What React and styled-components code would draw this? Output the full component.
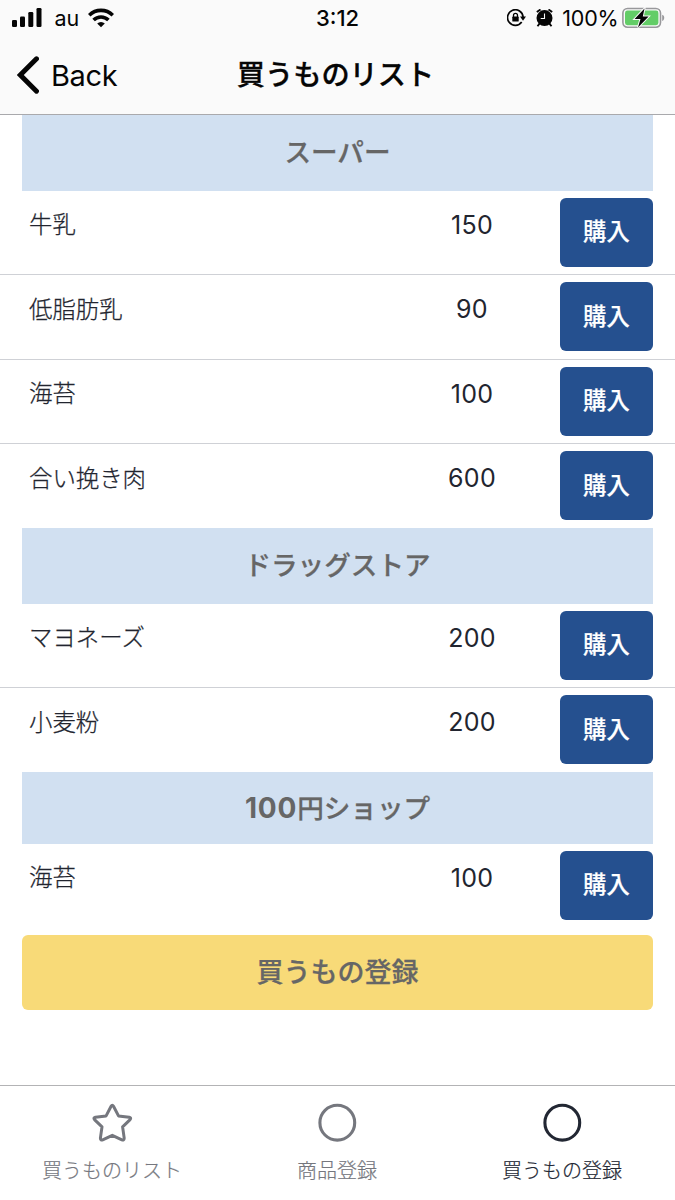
import React from "react";
import styled, { createGlobalStyle } from "styled-components";

const GlobalStyle = createGlobalStyle`
  *, *::before, *::after { box-sizing: border-box; }
  body {
    margin: 0;
    background: #fff;
    font-family: Inter, "Noto Sans CJK JP", sans-serif;
    color: #22252f;
  }
  button { font-family: inherit; border: 0; padding: 0; margin: 0; }
`;

const Screen = styled.div`
  width: 675px;
  height: 1200px;
  display: flex;
  flex-direction: column;
  overflow: hidden;
  background: #fff;
`;

const Header = styled.header`
  height: 115px;
  flex: none;
  background: #fafafa;
  border-bottom: 1px solid #a9a9ac;
  color: #050505;
`;

const StatusBar = styled.div`
  height: 36px;
  display: grid;
  grid-template-columns: 1fr auto 1fr;
  align-items: center;
  padding: 0 10px 0 12px;
`;

const StatusGroup = styled.div`
  display: flex;
  align-items: center;
  justify-content: ${(p) => (p.$end ? "flex-end" : "flex-start")};
  svg { display: block; flex: none; }
`;

const StatusText = styled.span`
  font-size: ${(p) => p.$size || 22}px;
  font-weight: ${(p) => p.$weight || 400};
  line-height: 28px;
  letter-spacing: ${(p) => p.$track || 0}px;
  margin: ${(p) => p.$margin || "0"};
`;

const NavBar = styled.nav`
  height: 78px;
  display: grid;
  grid-template-columns: 1fr auto 1fr;
  align-items: center;
  padding: 0 17px;
`;

const BackButton = styled.button`
  display: flex;
  align-items: center;
  gap: 12px;
  background: none;
  color: inherit;
  font-size: 29px;
  line-height: 36px;
  letter-spacing: -0.35px;
  svg { display: block; }
  span { padding-top: 2px; }
`;

const Title = styled.h1`
  margin: 0 4px 1px 0;
  font-size: 28.2px;
  line-height: 40px;
  font-weight: 500;
  -webkit-text-stroke: 0.3px currentColor;
`;

const List = styled.main`
  flex: 1;
  min-height: 0;
`;

const SectionTitle = styled.h2`
  margin: 0 22px;
  height: ${(p) => p.$height || 75.5}px;
  padding-bottom: ${(p) => (p.$height ? 0 : 2)}px;
  display: flex;
  align-items: center;
  justify-content: center;
  background: #d1e0f1;
  color: #666;
  font-size: 26.6px;
  line-height: 40px;
  font-weight: 500;
  -webkit-text-stroke: 0.25px currentColor;
`;

const Digits = styled.span`
  font-size: 28px;
  font-weight: 700;
  letter-spacing: 0.8px;
  -webkit-text-stroke: 0;
`;

const Row = styled.div`
  height: ${(p) => (p.$last ? 84 : 84.5)}px;
  display: grid;
  grid-template-columns: 1fr 176px 93px;
  padding: 7.4px 22px 0 29px;
  border-bottom: ${(p) => (p.$last ? "0" : "1px solid #cfd1d6")};
`;

const ItemName = styled.span`
  font-size: 23.4px;
  line-height: 36px;
  font-weight: 300;
  -webkit-text-stroke: 0.25px currentColor;
  padding-top: 9.5px;
`;

const Price = styled.span`
  font-size: 25px;
  line-height: 36px;
  letter-spacing: 0.3px;
  padding-top: 9px;
  text-align: center;
`;

const BuyButton = styled.button`
  height: 69px;
  border-radius: 6px;
  background: #25508f;
  color: #fff;
  font-size: 23.4px;
  line-height: 36px;
  font-weight: 500;
  -webkit-text-stroke: 0.2px currentColor;
`;

const RegisterButton = styled.button`
  display: block;
  width: calc(100% - 44px);
  height: 75px;
  margin: 7.5px 22px 0;
  border-radius: 6px;
  background: #f8da78;
  color: #666;
  font-size: 27px;
  line-height: 40px;
  font-weight: 500;
  -webkit-text-stroke: 0.25px currentColor;
`;

const TabBar = styled.nav`
  height: 115px;
  flex: none;
  display: grid;
  grid-template-columns: repeat(3, 1fr);
  border-top: 1px solid #b3b3b5;
`;

const Tab = styled.a`
  display: flex;
  flex-direction: column;
  align-items: center;
  padding: 16px 1px 0 0;
  color: ${(p) => (p.$active ? "#222733" : "#75777e")};
  font-size: 20px;
  line-height: 30px;
  font-weight: 300;
  -webkit-text-stroke: 0.2px currentColor;
  svg { display: block; margin-bottom: 12px; }
`;

const SignalIcon = () => (
  <svg width="30" height="20" viewBox="0 0 30 20" fill="currentColor">
    <rect x="0" y="12" width="5" height="7" rx="1.3" />
    <rect x="8" y="8.5" width="5" height="10.5" rx="1.3" />
    <rect x="16.3" y="4" width="5" height="15" rx="1.3" />
    <rect x="24.5" y="0" width="5" height="19" rx="1.3" />
  </svg>
);

const WifiIcon = () => (
  <svg width="26" height="20" viewBox="0 0 26 20">
    <g fill="none" stroke="currentColor" strokeWidth="3.6">
      <path d="M1.2 7.3a16.7 16.7 0 0 1 23.6 0" />
      <path d="M5.6 12a10.5 10.5 0 0 1 14.8 0" />
    </g>
    <path d="M13 19.3 9.2 15.5a5.4 5.4 0 0 1 7.6 0z" fill="currentColor" />
  </svg>
);

const RotationLockIcon = () => (
  <svg width="19" height="18" viewBox="0 0 19 18">
    <path d="M14.7 13A7.8 7.8 0 1 1 16.1 8" fill="none" stroke="currentColor" strokeWidth="1.7" />
    <path d="M13 7.5h6l-3 4.2z" fill="currentColor" />
    <rect x="5.3" y="7.6" width="6.4" height="5" rx=".7" fill="currentColor" />
    <path d="M6.5 8V6.4a2 2 0 0 1 4 0V8" fill="none" stroke="currentColor" strokeWidth="1.3" />
  </svg>
);

const AlarmIcon = () => (
  <svg width="17" height="19" viewBox="0 0 17 19">
    <circle cx="8.5" cy="9.1" r="8" fill="currentColor" />
    <path d="M.8 3 4.5.4M16.2 3 12.5.4" stroke="currentColor" strokeWidth="1.8" />
    <path d="M3.5 14.6 1.5 17.3M13.5 14.6l2 2.7" stroke="currentColor" strokeWidth="1.8" />
    <path d="M8.5 4.4v5.1H4.7" fill="none" stroke="#fafafa" strokeWidth="1.1" />
  </svg>
);

const BatteryIcon = () => (
  <svg width="43" height="22" viewBox="0 0 43 22">
    <rect x=".9" y="1.5" width="37.6" height="18.7" rx="4.6" fill="none" stroke="#98989b" strokeWidth="1.6" />
    <path d="M40.2 7.8c2.7.6 2.7 5.5 0 6.1z" fill="#98989b" />
    <rect x="3" y="3.5" width="33.4" height="14.7" rx="2.4" fill="#63cd67" />
    <path
      d="M22.5 1.4 12.6 12.1h5.9L16 20.4 26.6 9.5h-5.8z"
      fill="#050505"
      stroke="#fafafa"
      strokeWidth="2"
      paintOrder="stroke"
    />
  </svg>
);

const BackIcon = () => (
  <svg width="22" height="38" viewBox="0 0 22 38">
    <path
      d="M19.5 2.8 3.3 19l16.2 16.2"
      fill="none"
      stroke="currentColor"
      strokeWidth="4.9"
      strokeLinecap="round"
      strokeLinejoin="miter"
    />
  </svg>
);

const StarIcon = () => (
  <svg width="42" height="42" viewBox="0 0 42 42">
    <path
      d="M20.1 4.3Q21.3 2.3 22.5 4.3L27.5 13.9 38.2 15.2Q40.6 15.9 39.1 17.6L31.6 24.9 33.2 36.1Q33.1 38.6 30.9 37.8L21.3 33.3 11.7 37.8Q9.5 38.6 9.4 36.1L11 24.9 3.5 17.6Q2 15.9 4.4 15.2L15.1 13.9Z"
      fill="none"
      stroke="currentColor"
      strokeWidth="3"
      strokeLinejoin="round"
    />
  </svg>
);

const CircleIcon = () => (
  <svg width="42" height="42" viewBox="0 0 42 42">
    <circle cx="21.3" cy="20.7" r="17.4" fill="none" stroke="currentColor" strokeWidth="3.1" />
  </svg>
);

const sections = [
  {
    name: "スーパー",
    items: [
      ["牛乳", 150],
      ["低脂肪乳", 90],
      ["海苔", 100],
      ["合い挽き肉", 600],
    ],
  },
  {
    name: "ドラッグストア",
    items: [
      ["マヨネーズ", 200],
      ["小麦粉", 200],
    ],
  },
  { digits: "100", name: "円ショップ", height: 71.5, items: [["海苔", 100]] },
];

const tabs = [
  { label: "買うものリスト", Icon: StarIcon },
  { label: "商品登録", Icon: CircleIcon },
  { label: "買うもの登録", Icon: CircleIcon, active: true },
];

export default function App() {
  return (
    <>
      <GlobalStyle />
      <Screen>
        <Header>
          <StatusBar>
            <StatusGroup>
              <SignalIcon />
              <StatusText $size={21.5} $margin="0 8.5px 0 12.5px">au</StatusText>
              <WifiIcon />
            </StatusGroup>
            <StatusText $weight={500} $margin="0 2px 0 0">3:12</StatusText>
            <StatusGroup $end>
              <RotationLockIcon />
              <StatusText $margin="0 0 0 10.5px" />
              <AlarmIcon />
              <StatusText $size={21.5} $track={-0.2} $margin="0 3.5px 0 9px">100%</StatusText>
              <BatteryIcon />
            </StatusGroup>
          </StatusBar>
          <NavBar>
            <BackButton>
              <BackIcon />
              <span>Back</span>
            </BackButton>
            <Title>買うものリスト</Title>
          </NavBar>
        </Header>
        <List>
          {sections.map((section) => (
            <section key={section.name}>
              <SectionTitle $height={section.height}>
                {section.digits && <Digits>{section.digits}</Digits>}
                {section.name}
              </SectionTitle>
              {section.items.map(([name, price], i) => (
                <Row key={name} $last={i === section.items.length - 1}>
                  <ItemName>{name}</ItemName>
                  <Price>{price}</Price>
                  <BuyButton>購入</BuyButton>
                </Row>
              ))}
            </section>
          ))}
          <RegisterButton>買うもの登録</RegisterButton>
        </List>
        <TabBar>
          {tabs.map(({ label, Icon, active }) => (
            <Tab key={label} $active={active}>
              <Icon />
              {label}
            </Tab>
          ))}
        </TabBar>
      </Screen>
    </>
  );
}
